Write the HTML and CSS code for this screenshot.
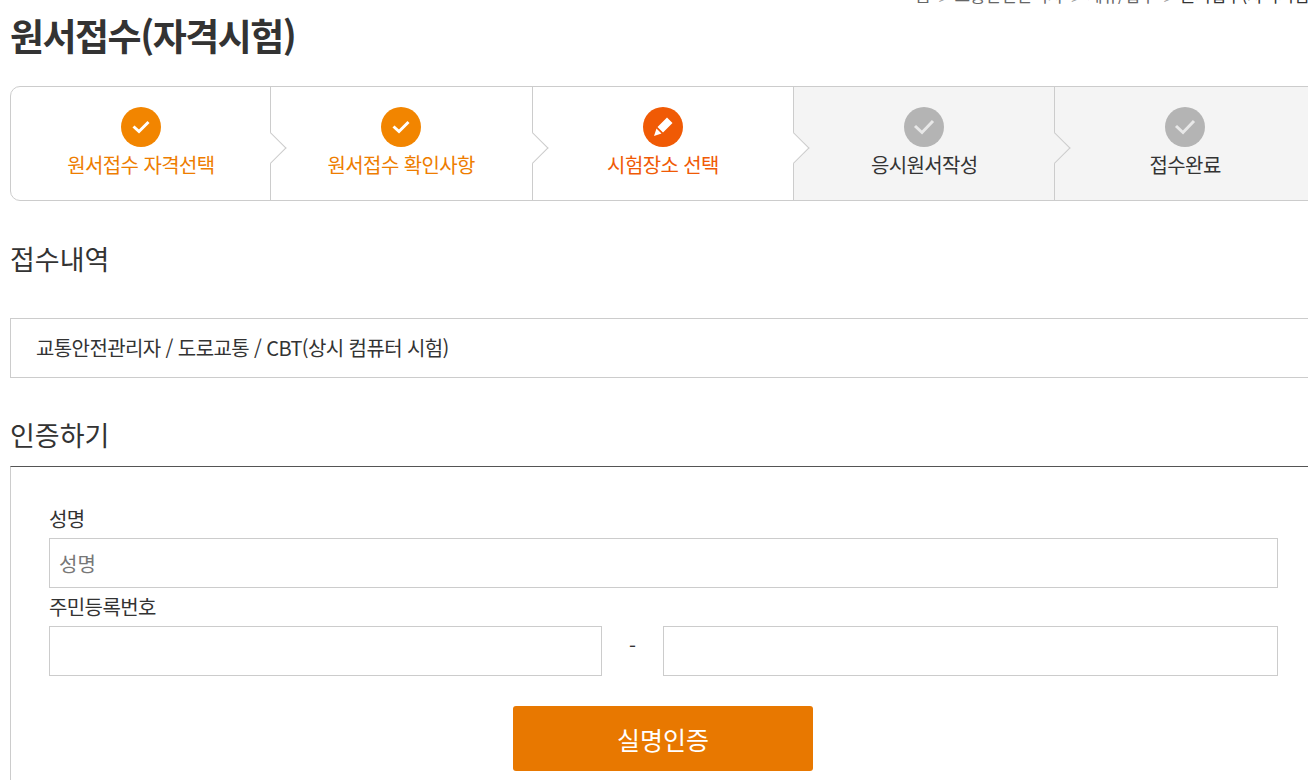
FILE: index.html
```html
<!DOCTYPE html>
<html lang="ko">
<head>
    <meta charset="UTF-8">
    <meta name="viewport" content="width=device-width, initial-scale=1.0">
    <title>원서접수(자격시험)</title>
    <link rel="stylesheet" href="styles.css">
</head>
<body>

    <div class="container">
        <div class="breadcrumb">
            <span>홈</span><i>&gt;</i><span>교통안전관리자</span><i>&gt;</i><span>제휴/접수</span><i>&gt;</i><strong>원서접수(자격시험)</strong>
        </div>
        <h1>원서접수(자격시험)</h1>

        <ol class="steps">
            <li class="step done">
                <span class="step-icon">
                    <svg width="18" height="14" viewBox="0 0 18 14"><path d="M1.500 6.500l5.500 5 9.500-9.500" fill="none" stroke="#fff" stroke-width="3"/></svg>
                </span>
                <span class="step-name">원서접수 자격선택</span>
            </li>
            <li class="step done">
                <span class="step-icon">
                    <svg width="18" height="14" viewBox="0 0 18 14"><path d="M1.500 6.500l5.500 5 9.500-9.500" fill="none" stroke="#fff" stroke-width="3"/></svg>
                </span>
                <span class="step-name">원서접수 확인사항</span>
            </li>
            <li class="step current">
                <span class="step-icon">
                    <svg width="20" height="20" viewBox="0 0 20 20"><path d="M14 .5l5.500 5.500-9.500 9.500-5.500-5.500zM3.500 11.500l5 5-7.500 2.500z" fill="#fff"/></svg>
                </span>
                <span class="step-name">시험장소 선택</span>
            </li>
            <li class="step todo">
                <span class="step-icon">
                    <svg width="22" height="16" viewBox="0 0 22 16"><path d="M2 7l7 6.500 11-11.500" fill="none" stroke="#e8e8e8" stroke-width="3"/></svg>
                </span>
                <span class="step-name">응시원서작성</span>
            </li>
            <li class="step todo last">
                <span class="step-icon">
                    <svg width="22" height="16" viewBox="0 0 22 16"><path d="M2 7l7 6.500 11-11.500" fill="none" stroke="#e8e8e8" stroke-width="3"/></svg>
                </span>
                <span class="step-name">접수완료</span>
            </li>
        </ol>

        <h2 class="section-title">접수내역</h2>
        <div class="summary">교통안전관리자 / 도로교통 / CBT(상시 컴퓨터 시험)</div>

        <h2 class="section-title auth-title">인증하기</h2>
        <form class="auth-box">
            <label class="field-label" for="name">성명</label>
            <input class="field" type="text" id="name" placeholder="성명">
            <label class="field-label" for="rrn1">주민등록번호</label>
            <div class="rrn-row">
                <input class="field" type="text" id="rrn1">
                <span class="rrn-dash">-</span>
                <input class="field" type="password" id="rrn2">
            </div>
            <div class="actions">
                <button type="button" class="btn-verify">실명인증</button>
            </div>
        </form>
    </div>

</body>
</html>
```

FILE: styles.css
```css
html, body {
    height: 100%;
    overflow: hidden;
}
body {
    font-family: "Noto Sans CJK KR", "Noto Sans", sans-serif;
    color: #333;
    background: #fff;
    margin: 0;
}
.container {
    width: 1306px;
    padding-left: 10px;
}
.breadcrumb {
    display: flex;
    justify-content: flex-end;
    align-items: baseline;
    height: 20px;
    margin-top: -15px;
    margin-right: 1px;
    font-size: 17px;
    line-height: 20px;
    letter-spacing: -0.100px;
    color: #666;
    white-space: nowrap;
}
.breadcrumb i {
    align-self: flex-end;
    font-style: normal;
    margin: 0 8px;
    font-size: 14px;
    line-height: 14px;
    color: #999;
}
.breadcrumb strong {
    font-weight: 400;
    color: #333;
}
h1 {
    margin: 0;
    padding-top: 5px;
    font-size: 37px;
    line-height: 50px;
    font-weight: 700;
    letter-spacing: -1.500px;
    color: #333;
}

/* 단계 */
.steps {
    display: flex;
    list-style: none;
    margin: 26px 0 0;
    padding: 0;
    height: 115px;
    box-sizing: border-box;
    border: 1px solid #ccc;
    border-radius: 10px 0 0 10px;
}
.step {
    position: relative;
    display: flex;
    flex-direction: column;
    align-items: center;
    width: 261px;
    box-sizing: border-box;
    padding-top: 20px;
    border-right: 1px solid #ccc;
}
.step:first-child {
    width: 260px;
    padding-left: 1px;
    border-radius: 10px 0 0 10px;
}
.step:nth-child(2),
.step:nth-child(3) {
    width: 262px;
}
.step::after {
    content: "";
    position: absolute;
    top: 50px;
    right: -12px;
    width: 22px;
    height: 22px;
    box-sizing: border-box;
    background: #fff;
    border-top: 1px solid #ccc;
    border-right: 1px solid #ccc;
    transform: rotate(45deg);
    z-index: 1;
}
.step.last {
    width: 260px;
    border-right: 0;
}
.step.last::after {
    display: none;
}
.step-icon {
    display: flex;
    align-items: center;
    justify-content: center;
    width: 40px;
    height: 40px;
    border-radius: 50%;
}
.step-name {
    margin-top: 3px;
    font-size: 20px;
    line-height: 30px;
    letter-spacing: -0.600px;
}
.done .step-icon {
    background: #f28500;
}
.done .step-name {
    color: #ee7d00;
}
.current .step-icon {
    background: #f05a05;
}
.current .step-name {
    color: #f05a05;
}
.todo {
    background: #f4f4f4;
}
.todo::after {
    background: #f4f4f4;
}
.todo .step-icon {
    background: #b4b4b4;
}
.todo .step-name {
    color: #333;
}

/* 섹션 */
.section-title {
    margin: 38px 0 0;
    font-size: 27px;
    line-height: 40px;
    font-weight: 400;
    color: #333;
}
.summary {
    margin-top: 39px;
    height: 60px;
    box-sizing: border-box;
    padding-left: 25px;
    border: 1px solid #ccc;
    border-right: 0;
    font-size: 20px;
    line-height: 58px;
    letter-spacing: -0.600px;
    color: #333;
}
.auth-title {
    margin-top: 37px;
}
.auth-box {
    margin-top: 11px;
    padding: 33px 38px 0 38px;
    height: 340px;
    border-top: 1px solid #555;
    border-left: 1px solid #ccc;
    box-sizing: border-box;
}
.field-label {
    display: block;
    font-size: 20px;
    line-height: 38px;
    letter-spacing: -0.600px;
    color: #333;
}
.field {
    display: block;
    width: 100%;
    height: 50px;
    box-sizing: border-box;
    padding: 0 9px;
    border: 1px solid #ccc;
    background: #fff;
    font-family: inherit;
    font-size: 20px;
    color: #333;
}
.field::placeholder {
    color: #777;
}
.rrn-row {
    display: grid;
    grid-template-columns: 553px 61px 615px;
}
.rrn-dash {
    text-align: center;
    font-size: 20px;
    line-height: 40px;
    color: #333;
}
.actions {
    margin-top: 30px;
    padding-right: 1px;
    text-align: center;
}
.btn-verify {
    width: 300px;
    height: 65px;
    border: none;
    border-radius: 3px;
    background: #e87800;
    color: #fff;
    font-family: inherit;
    font-size: 25px;
    cursor: pointer;
}
```
